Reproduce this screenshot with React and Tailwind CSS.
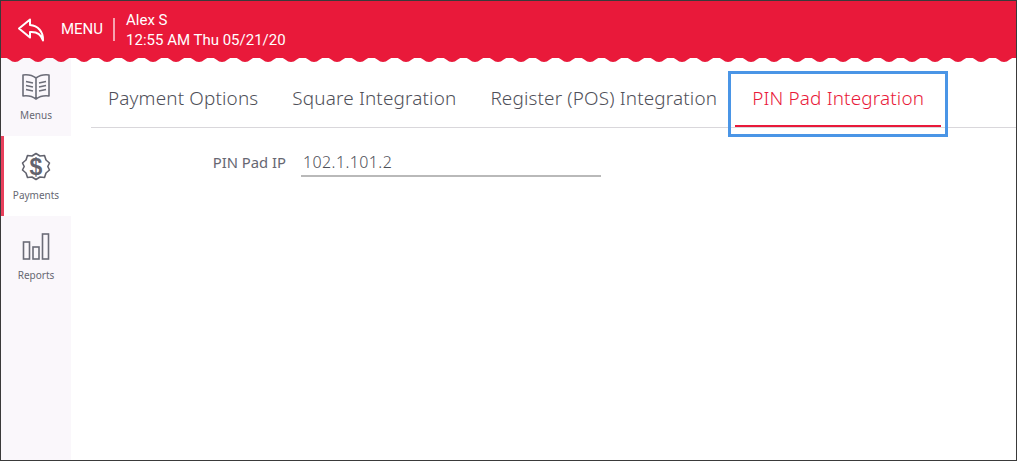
const WAVE_P = 23;
function Wave() {
  let d = "M-30 0H1040V5.5L1031.75 5.5";
  for (let x = 1031.75; x > -WAVE_P; x -= WAVE_P) {
    d += `Q${x - WAVE_P / 4} 10.5 ${x - WAVE_P / 2} 5.5Q${x - (3 * WAVE_P) / 4} 0.5 ${x - WAVE_P} 5.5`;
  }
  d += "L-30 5.5Z";
  return (
    <svg className="absolute left-0 top-[53px] w-[1015px] h-[10px]" viewBox="0 0 1015 10">
      <path d={d} fill="#e9193a" />
    </svg>
  );
}

function Tab({ children }) {
  return (
    <div className="h-full flex items-center pt-[1px] px-[17px] text-[18.9px] font-light tracking-[0.16px] text-[#4f5059]">
      {children}
    </div>
  );
}

function NavItem({ icon, label, active, className }) {
  return (
    <div className={`flex flex-col items-center ${active ? "bg-white border-l-[3px] border-[#e8405c] pr-[3px]" : ""} ${className}`}>
      <div className="h-[29px] flex items-start">{icon}</div>
      <span className="text-[10px] leading-[14px] text-[#666772]">{label}</span>
    </div>
  );
}

export default function App() {
  return (
    <div className="h-[461px] w-[1017px] border border-[#3a3a3a] flex flex-col overflow-hidden bg-white font-['Noto_Sans',sans-serif]">
      <header className="relative z-10 h-[57px] shrink-0 bg-[#e9193a] flex items-center text-white font-['Roboto',sans-serif] pl-[16px]">
        <svg width="28" height="24" viewBox="0 0 28 24" fill="none" stroke="white" strokeWidth="2" strokeLinejoin="round" strokeLinecap="round">
          <path d="M13 1.5 2 10.5 13 19.5V14C19 13.5 24 16 26 22.5 26.5 14 21 7.5 13 7Z" />
        </svg>
        <span className="ml-[16px] text-[15px]">MENU</span>
        <div className="ml-[10px] w-[2px] h-[23px] bg-[#f6a3b0]" />
        <div className="ml-[11px] text-[15px] leading-[20px]">
          <div>Alex S</div>
          <div>12:55 AM Thu 05/21/20</div>
        </div>
        <Wave />
      </header>
      <div className="flex-1 flex min-h-0">
        <aside className="w-[70px] shrink-0 bg-[#faf7fb]">
          <NavItem className="h-[78px] pt-[15px] gap-[6px]" label="Menus" icon={
            <svg width="30" height="27" viewBox="0 0 30 27" fill="none" stroke="#6b6c77" strokeWidth="1.6">
              <path d="M2 2C6 1.5 11 2 15 5 19 2 24 1.500 28 2V23C24 22.500 19 23 15 26 11 23 6 22.500 2 23ZM15 5V26" strokeLinejoin="round"/>
              <path d="M5 8.500 12 10M5 12.500 12 14M5 16.500 12 18M25 8.500 18 10M25 12.500 18 14M25 16.500 18 18" />
            </svg>
          } />
          <NavItem active className="h-[80px] pt-[16px] gap-[7px]" label="Payments" icon={
            <svg width="30" height="29" viewBox="0 0 30 29" fill="none" stroke="#62636e" strokeWidth="1.6">
              <path d="M15 1.500 19 4 23.500 3.500 25 8 28.500 11 26.800 14.500 28.500 18 25 21 23.500 25.500 19 25 15 27.500 11 25 6.500 25.500 5 21 1.500 18 3.200 14.500 1.500 11 5 8 6.500 3.500 11 4Z" strokeLinejoin="round"/>
              <text x="15" y="22.500" textAnchor="middle" fontSize="23" fontWeight="700" fill="#62636e" stroke="none" fontFamily="Liberation Sans">$</text>
            </svg>
          } />
          <NavItem className="h-[80px] pt-[16px] gap-[7px]" label="Reports" icon={
            <svg width="28" height="29" viewBox="0 0 28 29" fill="none" stroke="#6b6c77" strokeWidth="1.6">
              <rect x="1.500" y="10" width="6" height="17"/><rect x="11" y="15" width="6" height="12"/><rect x="20.500" y="2" width="6" height="25"/>
            </svg>
          } />
        </aside>
        <main className="flex-1 pl-[20px] pt-[10px]">
          <div className="h-[60px] flex border-b border-[#d9d7db]">
            <Tab>Payment Options</Tab>
            <Tab>Square Integration</Tab>
            <Tab>Register (POS) Integration</Tab>
            <div className="shrink-0 h-[66px] w-[220px] mt-[3px] ml-[-6px] border-[3px] border-[#4a95e6] px-[4px]">
              <div className="h-[53px] border-b-2 border-[#e9193a] flex items-center justify-center pb-[3px] text-[18.9px] font-light tracking-[0.16px] text-[#e9193a]">
                PIN Pad Integration
              </div>
            </div>
          </div>
          <div className="flex items-start mt-[19px]">
            <label className="w-[195px] text-right text-[14.800px] text-[#666772] leading-[30px]">PIN Pad IP</label>
            <div className="ml-[15px] w-[300px] h-[30px] border-b-2 border-[#b9b9b9] text-[16px] font-light text-[#4f5059] pl-[2px] leading-[30px] tracking-[0.4px]">102.1.101.2</div>
          </div>
        </main>
      </div>
    </div>
  );
}
